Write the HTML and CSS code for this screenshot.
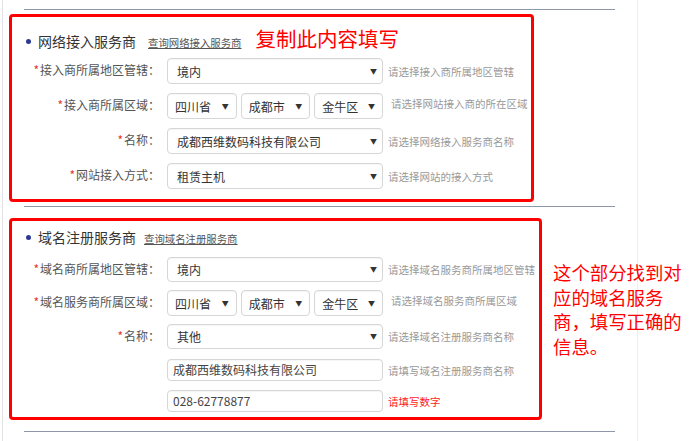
FILE: index.html
```html
<!DOCTYPE html>
<html lang="zh-CN">
<head>
<meta charset="utf-8">
<title>服务商信息</title>
<link rel="stylesheet" href="styles.css">
</head>
<body>
<div class="frame">
  <div class="rule rule-top"></div>

  <div class="box box-1">
    <div class="title-row">
      <span class="title">网络接入服务商</span>
      <a class="link" href="#">查询网络接入服务商</a>
      <span class="note-1">复制此内容填写</span>
    </div>
    <div class="row">
      <div class="label"><span class="star">*</span>接入商所属地区管辖：</div>
      <div class="sel sel-full"><span>境内</span><span class="arrow">▼</span></div>
      <div class="hint">请选择接入商所属地区管辖</div>
    </div>
    <div class="row">
      <div class="label"><span class="star">*</span>接入商所属区域：</div>
      <div class="sel-group">
        <div class="sel sel-small"><span>四川省</span><span class="arrow">▼</span></div>
        <div class="sel sel-small"><span>成都市</span><span class="arrow">▼</span></div>
        <div class="sel sel-small"><span>金牛区</span><span class="arrow">▼</span></div>
      </div>
      <div class="hint hint-up">请选择网站接入商的所在区域</div>
    </div>
    <div class="row">
      <div class="label"><span class="star">*</span>名称：</div>
      <div class="sel sel-full"><span>成都西维数码科技有限公司</span><span class="arrow">▼</span></div>
      <div class="hint">请选择网络接入服务商名称</div>
    </div>
    <div class="row">
      <div class="label"><span class="star">*</span>网站接入方式：</div>
      <div class="sel sel-full"><span>租赁主机</span><span class="arrow">▼</span></div>
      <div class="hint">请选择网站的接入方式</div>
    </div>
  </div>

  <div class="rule rule-mid"></div>

  <div class="section-2">
    <div class="box box-2">
      <div class="title-row title-row-2">
        <span class="title">域名注册服务商</span>
        <a class="link" href="#">查询域名注册服务商</a>
      </div>
      <div class="row row-b1">
        <div class="label"><span class="star">*</span>域名商所属地区管辖：</div>
        <div class="sel sel-full sel-25"><span>境内</span><span class="arrow">▼</span></div>
        <div class="hint">请选择域名服务商所属地区管辖</div>
      </div>
      <div class="row row-b2">
        <div class="label"><span class="star">*</span>域名服务商所属区域：</div>
        <div class="sel-group">
          <div class="sel sel-small"><span>四川省</span><span class="arrow">▼</span></div>
          <div class="sel sel-small"><span>成都市</span><span class="arrow">▼</span></div>
          <div class="sel sel-small"><span>金牛区</span><span class="arrow">▼</span></div>
        </div>
        <div class="hint hint-up">请选择域名服务商所属区域</div>
      </div>
      <div class="row row-b3">
        <div class="label"><span class="star">*</span>名称：</div>
        <div class="sel sel-full sel-25"><span>其他</span><span class="arrow">▼</span></div>
        <div class="hint">请选择域名注册服务商名称</div>
      </div>
      <div class="row row-b4">
        <div class="label"></div>
        <div class="input">成都西维数码科技有限公司</div>
        <div class="hint">请填写域名注册服务商名称</div>
      </div>
      <div class="row row-b5">
        <div class="label"></div>
        <div class="input">028-62778877</div>
        <div class="hint hint-red">请填写数字</div>
      </div>
    </div>
    <div class="note-2">这个部分找到对<br>应的域名服务<br>商，填写正确的<br>信息。</div>
  </div>

  <div class="rule rule-bottom"></div>
</div>
</body>
</html>
```

FILE: styles.css
```css
html, body {
  margin: 0;
  padding: 0;
  background: #fff;
}

body {
  font-family: "Noto Sans CJK SC", "Noto Sans", sans-serif;
  color: #333;
  overflow: hidden;
}

.frame {
  margin-left: 2px;
  width: 636px;
  height: 441px;
  box-sizing: border-box;
  border-left: 1px solid #e3e3e3;
  border-right: 1px solid #ededed;
  padding-top: 9px;
}

.rule {
  margin-left: 21px;
  width: 591px;
  height: 1px;
  background: #8e97a9;
}

.rule-mid { margin-top: 4px; }
.rule-bottom { margin-top: 11px; }

.box {
  margin-left: 6px;
  box-sizing: border-box;
  border: 3px solid #ff0000;
  border-radius: 4px;
}

.box-1 {
  margin-top: 4px;
  width: 525px;
  padding: 8px 0 10px 0;
}

.section-2 {
  display: flex;
  align-items: flex-start;
  margin-top: 11px;
  width: 700px;
}

.box-2 {
  width: 533px;
  padding: 6px 0 5px 0;
  flex: none;
}

.title-row {
  display: flex;
  align-items: baseline;
  padding-left: 14px;
  height: 26px;
}

.title-row-2 {
  height: 20px;
}

.title {
  font-size: 14px;
  line-height: 20px;
  color: #333;
  white-space: nowrap;
}

.title::before {
  content: "";
  display: inline-block;
  width: 5px;
  height: 5px;
  border-radius: 50%;
  background: #2c3990;
  vertical-align: middle;
  margin-right: 7px;
  position: relative;
  top: -2px;
}

.link {
  font-size: 10.4px;
  color: #555;
  text-decoration: underline;
  margin-left: 12px;
  white-space: nowrap;
}

.title-row-2 .link { margin-left: 8px; }

.note-1 {
  font-size: 20.5px;
  line-height: 26px;
  color: #ff0000;
  margin-left: 14px;
  white-space: nowrap;
}

.row {
  display: flex;
  align-items: flex-start;
  margin-top: 9px;
}

.box-1 .title-row + .row { margin-top: 7px; }

.row-b1 { margin-top: 10px; }
.row-b2 { margin-top: 8px; }
.row-b3 { margin-top: 8px; }
.row-b4 { margin-top: 10px; }
.row-b5 { margin-top: 9px; }

.label {
  width: 148px;
  flex: none;
  text-align: right;
  font-size: 12px;
  line-height: 24px;
  color: #555;
  white-space: nowrap;
  margin-right: 7px;
}

.star {
  color: #e8342c;
  margin-right: 1px;
}

.sel {
  display: flex;
  align-items: center;
  justify-content: space-between;
  box-sizing: border-box;
  height: 26px;
  border: 1px solid #d6d6d6;
  border-radius: 4px;
  background: #fff;
  font-size: 12px;
  color: #333;
  white-space: nowrap;
  box-shadow: inset 0 1px 1px rgba(0, 0, 0, 0.04);
}

.sel-25 { height: 25px; }

.sel-full {
  width: 216px;
  padding: 0 5px 0 9px;
}

.sel-group {
  display: flex;
  gap: 4px;
  width: 216px;
  flex: none;
}

.sel-small {
  width: 70px;
  padding: 0 7px 0 7px;
}

.sel-small:last-child { width: 69px; }

.arrow {
  font-size: 7px;
  color: #333;
  line-height: 1;
}

.input {
  box-sizing: border-box;
  width: 216px;
  height: 22px;
  border: 1px solid #d6d6d6;
  border-radius: 4px;
  padding-left: 5px;
  font-size: 12px;
  line-height: 20px;
  color: #444;
  white-space: nowrap;
  box-shadow: inset 0 1px 1px rgba(0, 0, 0, 0.04);
}

.hint {
  align-self: center;
  margin-left: 5px;
  font-size: 10.5px;
  color: #999;
  white-space: nowrap;
}

.hint-up {
  margin-left: 8px;
  margin-bottom: 6px;
}

.hint-red { color: #ff1a1a; }

.note-2 {
  margin-left: 11px;
  margin-top: 42px;
  font-size: 18.4px;
  line-height: 24.5px;
  color: #ff0000;
  white-space: nowrap;
}
```
